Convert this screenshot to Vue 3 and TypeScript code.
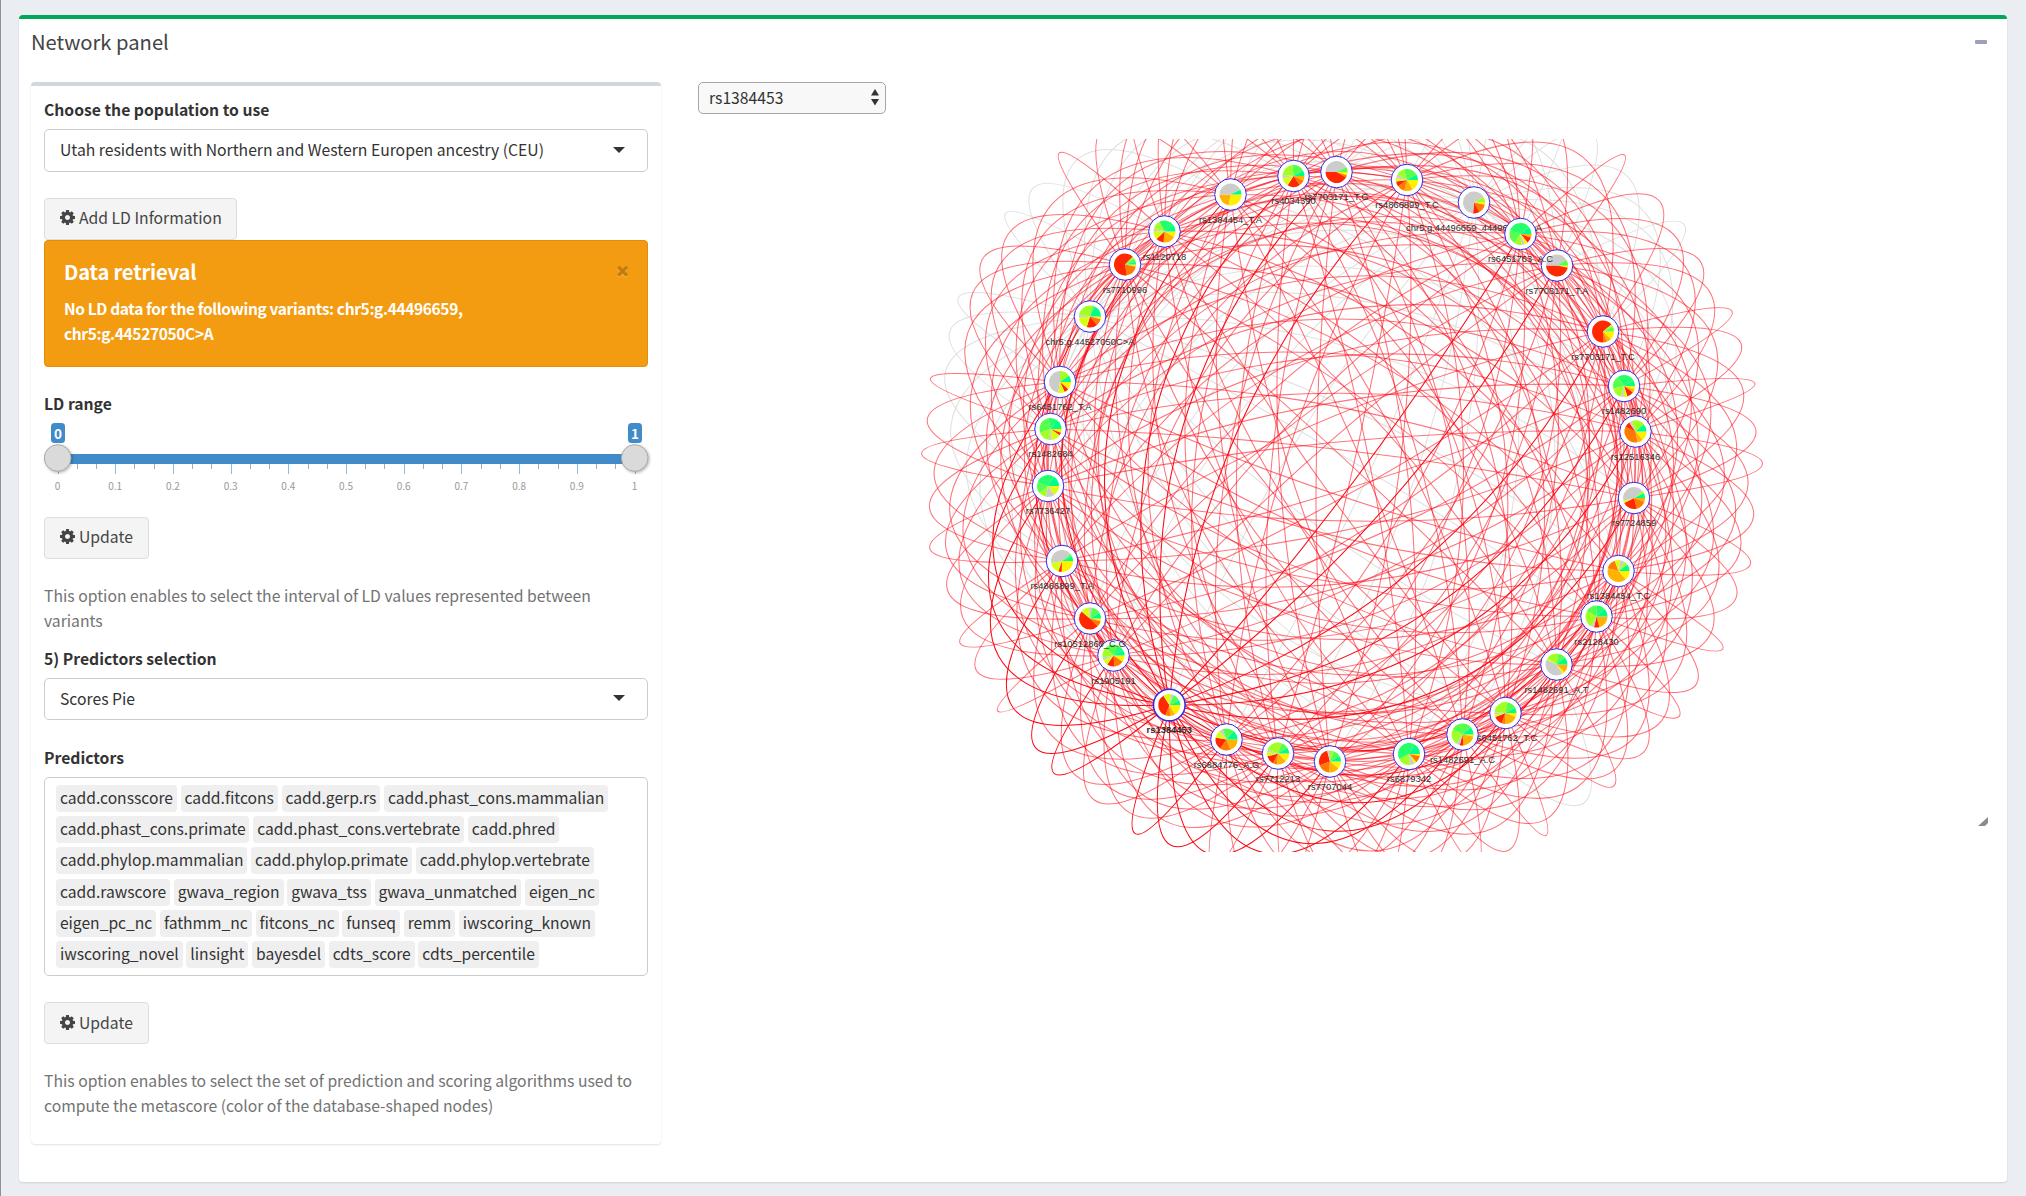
<script setup lang="ts">
interface GraphNode {
  id: string
  x: number
  y: number
  // slices clockwise from 3 o'clock: colour key followed by degrees
  pie: string
}

const palette: Record<string, string> = {
  Y: '#fff000', O: '#ffb200', o: '#ff7a00', R: '#ff2800', L: '#d6ff14',
  l: '#a2ff26', G: '#55ff4c', g: '#26ff6c', C: '#00ff88', x: '#cccccc',
}

// clockwise around the circle
const nodes: GraphNode[] = [
  { id: 'rs7703171_T.G', x: 1336.5, y: 172, pie: 'Y18 o12 R150 x155 G25' },
  { id: 'rs4866899_T.C', x: 1407, y: 180, pie: 'Y60 O45 o40 R27 L18 x20 l45 G75 C30' },
  { id: 'chr5:g.44496659_44496660C>A', x: 1474, y: 202.5, pie: 'Y12 o48 R35 x235 l30' },
  { id: 'rs6451763_A.C', x: 1520.5, y: 234, pie: 'O20 R30 Y18 x15 l42 G75 g120 C40' },
  { id: 'rs7703171_T.A', x: 1557, y: 265.5, pie: 'Y12 R168 x150 G30' },
  { id: 'rs7703171_T.C', x: 1603, y: 331.5, pie: 'Y45 O25 o20 R230 l15 G25' },
  { id: 'rs1482690', x: 1624, y: 386, pie: 'Y18 O18 R36 L20 x14 l60 G70 g94 C30' },
  { id: 'rs12516346', x: 1635.5, y: 431.5, pie: 'Y50 O30 o125 R30 x15 l68 C42' },
  { id: 'rs7724859', x: 1634, y: 498, pie: 'O20 o55 R78 L12 x155 l15 C25' },
  { id: 'rs1384454_T.C', x: 1618.5, y: 571, pie: 'Y50 O145 o55 L32 x22 l21 C35' },
  { id: 'rs2128430', x: 1596.5, y: 616.5, pie: 'O75 R28 x14 l93 G60 g45 C45' },
  { id: 'rs1482691_A.T', x: 1556.5, y: 664.5, pie: 'O45 Y13 x147 L10 l65 G40 C40' },
  { id: 'rs6451762_T.C', x: 1505.5, y: 713, pie: 'Y22 O70 o18 R48 L14 x10 l98 G50 C30' },
  { id: 'rs1482691_A.C', x: 1462.5, y: 734.5, pie: 'Y10 O75 R20 x18 l87 G110 C40' },
  { id: 'rs6879342', x: 1409, y: 754, pie: 'Y10 o38 L12 x25 l68 g147 C60' },
  { id: 'rs7707044', x: 1330, y: 761.5, pie: 'Y40 O55 o65 R95 x15 l20 G40 C30' },
  { id: 'rs7712213', x: 1278, y: 753.5, pie: 'Y45 O50 o22 R48 L23 x12 l90 G38 C32' },
  { id: 'rs6884776_A.G', x: 1226.5, y: 739.5, pie: 'O70 o55 R65 L40 x20 G60 C50' },
  { id: 'rs1384453', x: 1169.3, y: 705, pie: 'Y60 O25 o25 R128 L42 x14 G42 C24' },
  { id: 'rs1905191', x: 1113.5, y: 655.5, pie: 'Y35 o50 R40 L30 x15 l55 G65 g40 C30' },
  { id: 'rs10512860_C.G', x: 1090, y: 618.5, pie: 'Y15 o30 R175 L45 x17 G48 C30' },
  { id: 'rs4866899_T.A', x: 1062, y: 561, pie: 'Y92 R18 L60 x150 G15 C25' },
  { id: 'rs7736427', x: 1048, y: 486, pie: 'Y12 L43 x45 l40 G60 g100 C60' },
  { id: 'rs1482684', x: 1050.5, y: 429, pie: 'Y20 R15 L50 x15 l60 G100 g50 C50' },
  { id: 'rs6451762_T.A', x: 1060, y: 382, pie: 'Y42 R23 L35 x170 l55 C35' },
  { id: 'chr5:g.44527050C>A', x: 1090, y: 316.5, pie: 'Y15 o35 R57 L68 x13 l95 G12 C65' },
  { id: 'rs7710996', x: 1125, y: 264.5, pie: 'Y12 o68 R235 l10 G20 C15' },
  { id: 'rs1120718', x: 1164.5, y: 231.5, pie: 'Y30 O65 R42 L45 x15 l45 g80 C38' },
  { id: 'rs1384454_T.A', x: 1230.5, y: 194.5, pie: 'Y100 O80 x155 C25' },
  { id: 'rs4034390', x: 1293.5, y: 176, pie: 'O25 o30 R67 L48 x15 l80 G65 C30' },
]

const center = { x: 1341.5, y: 467 }
const selected = 'rs1384453'

// the support point of each curve is pushed outward from the centre of the circle
function edgePath(a: GraphNode, b: GraphNode): string {
  const mx = (a.x + b.x) / 2 - center.x
  const my = (a.y + b.y) / 2 - center.y
  const r = Math.hypot(mx, my) || 1
  const k = (22 + 2.5 * r - 0.0024 * r * r) / r
  return `M${a.x} ${a.y}Q${(center.x + mx * k).toFixed(1)} ${(center.y + my * k).toFixed(1)} ${b.x} ${b.y}`
}

const edges: { d: string; kind: string }[] = []
nodes.forEach((a, i) => {
  nodes.slice(i + 1).forEach((b) => {
    const noData = a.id.startsWith('chr5') || b.id.startsWith('chr5')
    const sameVariant = a.id.split('_')[0] === b.id.split('_')[0]
    const active = a.id === selected || b.id === selected
    const kind = noData || sameVariant ? 'none' : active ? 'active' : 'ld'
    edges.push({ d: edgePath(a, b), kind })
  })
})
const rank: Record<string, number> = { none: 0, ld: 1, active: 2 }
edges.sort((p, q) => rank[p.kind] - rank[q.kind])

function slices(pie: string): { d: string; fill: string }[] {
  const r = 11
  const parts = pie.split(' ').map((s) => ({ key: s[0], deg: Number(s.slice(1)) }))
  const total = parts.reduce((sum, p) => sum + p.deg, 0)
  let from = 0
  return parts.map((p) => {
    const sweep = (p.deg / total) * Math.PI * 2
    const to = from + sweep
    const d = `M0 0L${(r * Math.cos(from)).toFixed(2)} ${(r * Math.sin(from)).toFixed(2)}A${r} ${r} 0 ${sweep > Math.PI ? 1 : 0} 1 ${(r * Math.cos(to)).toFixed(2)} ${(r * Math.sin(to)).toFixed(2)}Z`
    from = to
    return { d, fill: palette[p.key] }
  })
}

// nodes painted first let their neighbours' labels run over them
const early = ['chr5:g.44496659_44496660C>A', 'rs7703171_T.A', 'rs1905191', 'rs12516346', 'rs6451762_T.C', 'rs2128430']
const painted = [
  ...nodes.filter((n) => early.includes(n.id)),
  ...nodes.filter((n) => !early.includes(n.id)),
].map((n) => ({ ...n, slices: slices(n.pie) }))

const predictorRows: string[][] = [
  ['cadd.consscore', 'cadd.fitcons', 'cadd.gerp.rs', 'cadd.phast_cons.mammalian'],
  ['cadd.phast_cons.primate', 'cadd.phast_cons.vertebrate', 'cadd.phred'],
  ['cadd.phylop.mammalian', 'cadd.phylop.primate', 'cadd.phylop.vertebrate'],
  ['cadd.rawscore', 'gwava_region', 'gwava_tss', 'gwava_unmatched', 'eigen_nc'],
  ['eigen_pc_nc', 'fathmm_nc', 'fitcons_nc', 'funseq', 'remm', 'iwscoring_known'],
  ['iwscoring_novel', 'linsight', 'bayesdel', 'cdts_score', 'cdts_percentile'],
]

const ticks = Array.from({ length: 31 }, (_, i) => ({
  x: 13.5 + (i * 577) / 30,
  major: i % 3 === 0,
  label: i % 3 === 0 ? String(i / 30) : '',
}))

const cog =
  'M1024 640q0-106-75-181t-181-75-181 75-75 181 75 181 181 75 181-75 75-181zm512-109v222q0 12-8 23t-20 13l-185 28q-19 54-39 91 35 50 107 138 10 12 10 25t-9 23q-27 37-99 108t-94 71q-12 0-26-9l-138-108q-44 23-91 38-16 136-29 186-7 28-36 28h-222q-14 0-24.500-8.500t-11.500-21.500l-28-184q-49-16-90-37l-141 107q-10 9-25 9-14 0-25-11-126-114-165-168-7-10-7-23 0-12 8-23 15-21 51-66.500t54-70.500q-27-50-41-99l-183-27q-13-2-21-12.500t-8-23.500v-222q0-12 8-23t19-13l186-28q14-46 39-92-40-57-107-138-10-12-10-24 0-10 9-23 26-36 98.500-107.500t94.500-71.500q13 0 26 10l138 107q44-23 91-38 16-136 29-186 7-28 36-28h222q14 0 24.500 8.500t11.500 21.500l28 184q49 16 90 37l142-107q9-9 24-9 13 0 25 10 129 119 165 170 7 8 7 22 0 12-8 23-15 21-51 66.500t-54 70.500q26 50 41 98l183 28q13 2 21 12.500t8 23.500z'
</script>

<template>
  <div class="page">
    <section class="panel">
      <header class="panel-head">
        <h3>Network panel</h3>
        <span class="minus"></span>
      </header>
      <div class="panel-body">
        <div class="box">
          <label class="lbl">Choose the population to use</label>
          <div class="select first">
            <span>Utah residents with Northern and Western Europen ancestry (CEU)</span>
            <i class="caret"></i>
          </div>
          <button class="btn add">
            <svg class="cog" viewBox="0 -128 1536 1536"><path :d="cog" /></svg><span>Add LD Information</span>
          </button>
          <div class="alert">
            <div class="alert-head"><h4>Data retrieval</h4><span class="close">×</span></div>
            <p>No LD data for the following variants: chr5:g.44496659,<br />chr5:g.44527050C&gt;A</p>
          </div>
          <label class="lbl range">LD range</label>
          <svg class="slider" width="610" height="76" viewBox="0 0 610 76">
            <rect x="13" y="32" width="578" height="10" fill="#428bca" />
            <g v-for="t in ticks" :key="t.x">
              <rect :x="Math.round(t.x)" y="42" width="1" :height="t.major ? 10 : 5" :fill="t.major ? '#8fbbdf' : '#aaaaaa'" />
              <text v-if="t.major" class="tick" :x="t.x" y="68">{{ t.label }}</text>
            </g>
            <rect x="7" y="1" width="14" height="20" rx="3.5" fill="#428bca" />
            <rect x="584" y="1" width="14" height="20" rx="3.5" fill="#428bca" />
            <text class="badge" x="14" y="16.500">0</text>
            <text class="badge" x="591" y="16.500">1</text>
            <circle class="handle" cx="13.700" cy="36" r="13.300" />
            <circle class="handle" cx="590.700" cy="36" r="13.300" />
          </svg>
          <button class="btn upd1">
            <svg class="cog" viewBox="0 -128 1536 1536"><path :d="cog" /></svg><span>Update</span>
          </button>
          <p class="help h1">This option enables to select the interval of LD values represented between<br />variants</p>
          <label class="lbl pred">5) Predictors selection</label>
          <div class="select second">
            <span>Scores Pie</span>
            <i class="caret"></i>
          </div>
          <label class="lbl">Predictors</label>
          <div class="chips">
            <div v-for="(row, r) in predictorRows" :key="r" class="chip-row">
              <span v-for="p in row" :key="p" class="chip">{{ p }}</span>
            </div>
          </div>
          <button class="btn upd2">
            <svg class="cog" viewBox="0 -128 1536 1536"><path :d="cog" /></svg><span>Update</span>
          </button>
          <p class="help h2">This option enables to select the set of prediction and scoring algorithms used to<br />compute the metascore (color of the database-shaped nodes)</p>
        </div>
        <div class="graph">
          <div class="native">
            <span>rs1384453</span>
            <svg width="8" height="17" viewBox="0 0 8 17"><path d="M0 6.500L4 0L8 6.500ZM0 10L4 16.500L8 10Z" fill="#333" /></svg>
          </div>
          <svg class="net" width="1290" height="713" viewBox="698 139 1290 713">
            <path v-for="(e, i) in edges" :key="i" :d="e.d" :class="['edge', e.kind]" />
            <g v-for="n in painted" :key="n.id" :transform="`translate(${n.x} ${n.y})`">
              <circle r="15.800" :class="['ring', { on: n.id === selected }]" />
              <path v-for="(s, i) in n.slices" :key="i" :d="s.d" :fill="s.fill" />
              <text y="28" :class="['name', { on: n.id === selected }]">{{ n.id }}</text>
            </g>
          </svg>
          <svg class="grip" width="10" height="10" viewBox="0 0 10 10"><path d="M10 0V6L7 9H0Z" fill="#8c8c8c" /></svg>
        </div>
      </div>
    </section>
  </div>
</template>

<style>
body {
  background: #ecf0f5;
}
</style>

<style scoped>
* {
  box-sizing: border-box;
}
.page {
  height: 1196px;
  padding: 15px 19px 14px 18px;
  border-left: 1px solid #8e9298;
  background: #eaeef3;
  overflow: hidden;
  font-family: 'Noto Sans CJK SC', 'Open Sans', sans-serif;
  font-size: 15.730px;
  color: #333;
}
.panel {
  height: 1167px;
  border-top: 4px solid #00a65a;
  border-radius: 4px;
  background: #fff;
  box-shadow: 0 1px 2px rgba(0, 0, 0, 0.12);
}
.panel-head {
  display: flex;
  justify-content: space-between;
  height: 63px;
  padding: 9px 20px 0 12px;
}
h3 {
  margin: 0;
  font-size: 20.200px;
  font-weight: 400;
  line-height: 28px;
  color: #444;
}
.minus {
  width: 12px;
  height: 4px;
  margin-top: 12px;
  border-radius: 1px;
  background: #9aa1b8;
}
.panel-body {
  display: flex;
  padding-left: 12px;
}
.box {
  flex: none;
  width: 630px;
  height: 1062px;
  margin-right: 37px;
  padding: 13px 13px 0;
  border-top: 4px solid #d2d6de;
  border-radius: 4px;
  box-shadow: 0 1px 2px rgba(0, 0, 0, 0.12);
}
.lbl {
  display: block;
  height: 30px;
  padding-top: 1px;
  line-height: 20px;
  font-weight: 700;
}
.select {
  display: flex;
  align-items: center;
  justify-content: space-between;
  height: 43px;
  padding: 0 22px 2px 15px;
  border: 1px solid #ccc;
  border-radius: 5px;
}
.caret {
  border-left: 6.500px solid transparent;
  border-right: 6.500px solid transparent;
  border-top: 6.500px solid #333;
}
.btn {
  display: flex;
  align-items: center;
  height: 42px;
  padding: 0 15px 2px;
  border: 1px solid #ddd;
  border-radius: 4px;
  background: #f4f4f4;
  color: #444;
  font: inherit;
  white-space: nowrap;
}
.cog {
  flex: none;
  width: 15px;
  height: 15px;
  margin-right: 4px;
  fill: #444;
}
.add {
  width: 193px;
  margin-top: 26px;
  padding-bottom: 4px;
}
.alert {
  height: 127px;
  padding: 17px 17px 0 19px;
  border: 1px solid #e08e0b;
  border-radius: 4px;
  background: #f39c12;
  color: #fff;
  font-weight: 700;
}
.alert-head {
  display: flex;
  justify-content: space-between;
}
h4 {
  margin: 0;
  font-size: 20.200px;
  letter-spacing: -0.2px;
  line-height: 28px;
}
.close {
  font-family: 'Open Sans', sans-serif;
  font-size: 25px;
  font-weight: 800;
  line-height: 25px;
  color: #c27c0e;
  text-shadow: 0 1px 0 rgba(255, 255, 255, 0.3);
}
.alert p {
  margin: 10px 0 0;
  line-height: 25px;
  font-size: 15.500px;
  letter-spacing: -0.36px;
}
.range {
  margin-top: 26px;
  height: 29px;
}
.slider {
  display: block;
  overflow: visible;
}
.tick {
  font-size: 10px;
  fill: #999;
  text-anchor: middle;
}
.badge {
  font-size: 13.500px;
  font-weight: 700;
  fill: #fff;
  text-anchor: middle;
}
.handle {
  fill: #dadada;
  stroke: #aaa;
  stroke-width: 1;
  filter: drop-shadow(1px 1px 1.500px rgba(0, 0, 0, 0.3));
}
.upd1 {
  width: 105px;
  margin-top: 19px;
  padding-bottom: 4px;
}
.help {
  margin: 0;
  line-height: 25px;
  color: #737373;
  white-space: nowrap;
}
.h1 {
  margin-top: 24px;
}
.pred {
  margin-top: 15px;
}
.second {
  height: 42px;
  margin-bottom: 27px;
}
.chips {
  height: 199px;
  padding: 7px 0 0 11px;
  border: 1px solid #ccc;
  border-radius: 5px;
}
.chip-row {
  display: flex;
  gap: 3.800px;
  height: 31.200px;
}
.chip {
  height: 27px;
  padding: 0 3.900px;
  border-radius: 4px;
  background: #efefef;
  line-height: 25px;
  font-size: 15.650px;
  white-space: nowrap;
}
.upd2 {
  width: 105px;
  margin-top: 26px;
}
.h2 {
  margin-top: 24px;
}
.graph {
  width: 1290px;
}
.native {
  display: flex;
  align-items: center;
  justify-content: space-between;
  width: 188px;
  height: 32px;
  margin-bottom: 25px;
  padding: 0 6px 1px 10px;
  border: 1px solid #a6a6a6;
  border-radius: 5px;
  background: #f8f8f8;
}
.net {
  display: block;
}
.grip {
  display: block;
  margin: -35px 0 0 1280px;
}
.edge {
  fill: none;
  stroke-width: 1.050;
}
.none {
  stroke: #e0e0e0;
}
.ld {
  stroke: rgba(255, 0, 16, 0.55);
}
.active {
  stroke: #fb0a14;
}
.ring {
  fill: #fff;
  stroke: #2b2be8;
  stroke-width: 1;
}
.ring.on {
  stroke-width: 1.500;
}
.name {
  font-family: 'Liberation Sans', Arial, sans-serif;
  font-size: 9.400px;
  fill: #2c2c2c;
  text-anchor: middle;
}
.name.on {
  font-weight: 700;
}
</style>
